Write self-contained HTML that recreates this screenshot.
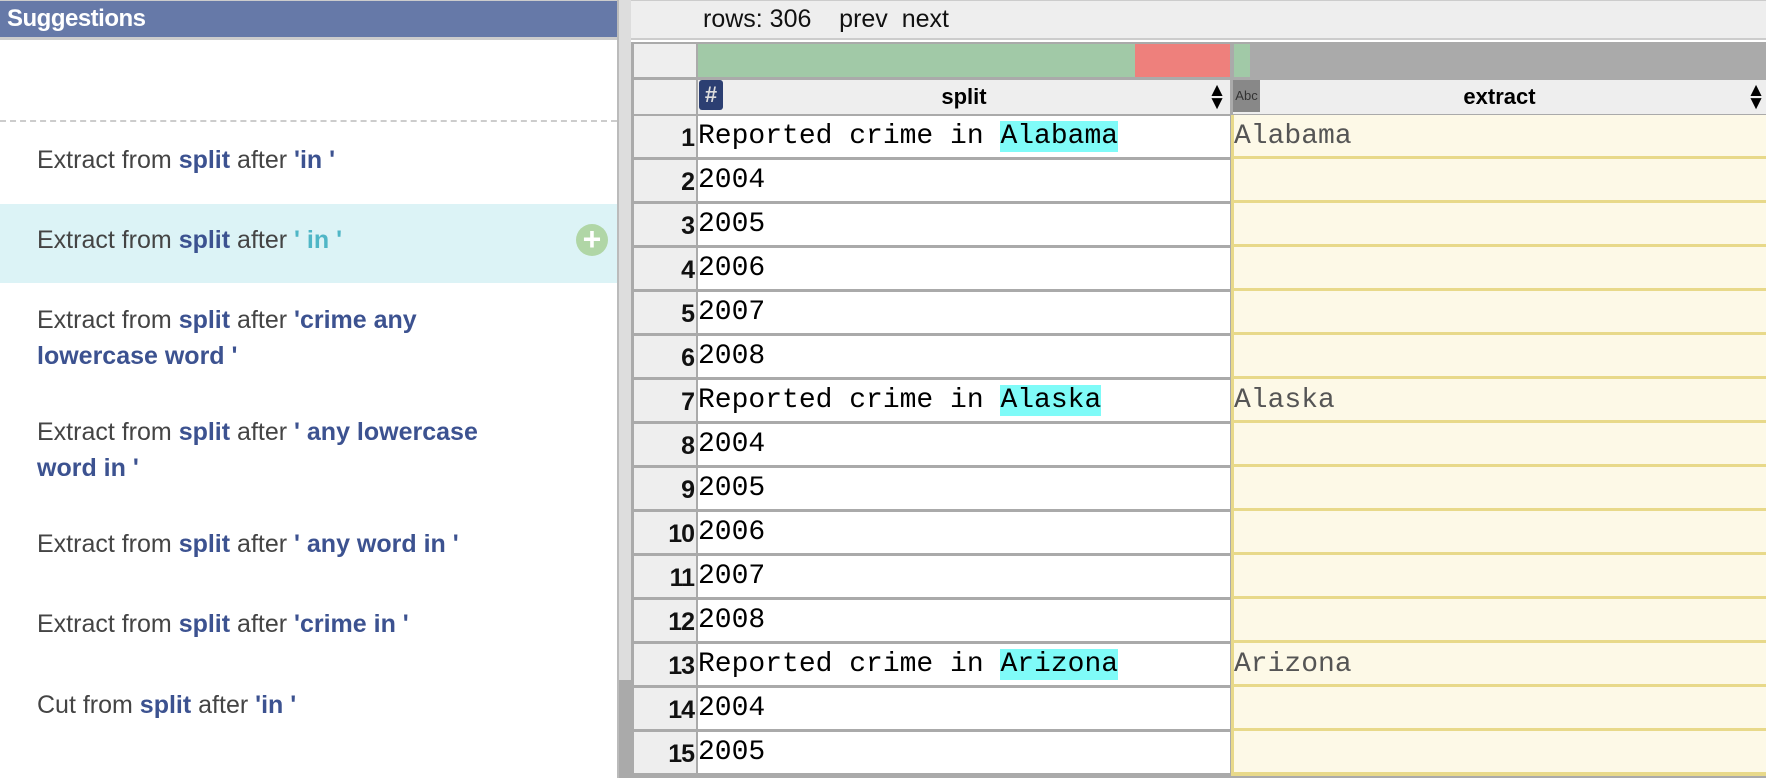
<!DOCTYPE html>
<html><head><meta charset="utf-8"><style>
*{margin:0;padding:0;box-sizing:border-box}
body{width:1766px;height:778px;overflow:hidden;background:#fff;font-family:"Liberation Sans",sans-serif;position:relative}
.abs{position:absolute}
#left{left:0;top:0;width:617px;height:778px;background:#fff}
#hdr{left:0;top:0;width:617px;height:40px;background:#6679a8;color:#fff;font-weight:bold;font-size:24px;padding:4px 0 0 7px;border-top:1px solid #ccc;border-bottom:3px solid #ccc;letter-spacing:-0.5px}
.sg{position:absolute;left:37px;font-size:25px;color:#444;line-height:36px;letter-spacing:0;width:480px}
.sg b{color:#3c5290}
.sg b.cy{color:#4fb6c6}
#hl{left:0;top:204px;width:617px;height:79px;background:#dcf3f6}
#plus{left:576px;top:224px;width:32px;height:32px;border-radius:50%;background:#b0d6a6;color:#fff;font-size:32px;line-height:30px;text-align:center;font-weight:bold}
#sb{left:617px;top:0;width:14px;height:778px;background:#ddd;border-left:2px solid #bbb}
#thumb{left:619px;top:680px;width:12px;height:98px;background:#aaa}
#top{left:631px;top:0;width:1135px;height:40px;background:#eee;border-top:1px solid #ccc;border-bottom:2px solid #ccc;font-size:25px;padding:4px 0 0 72px;color:#111}
#grid{left:631px;top:42px;width:1135px;height:736px;background:#aaa}
.c{position:absolute}
.rn{background:#eee;font-weight:bold;font-size:25px;text-align:right;padding-right:2px;color:#111;line-height:44px;letter-spacing:-1px}
.cell{background:#fff;font-family:"Liberation Mono",monospace;font-size:28px;line-height:42px;color:#000;white-space:pre}
.ex{background:#fdf9e7;font-family:"Liberation Mono",monospace;font-size:28px;line-height:40px;color:#555;border-left:3px solid #e8d98a;border-bottom:4px solid #e8d98a}
.hi{background:#7ffbf8}
.arr{font-size:19px;line-height:13px;text-align:center;width:20px}
</style></head><body>
<div id="left" class="abs"></div>
<div id="hdr" class="abs">Suggestions</div>
<div class="abs" style="left:0;top:120px;width:617px;border-top:2px dashed #ccc"></div>
<div id="hl" class="abs"></div>
<div id="plus" class="abs">+</div>
<div class="sg" style="top:142px">Extract from <b>split</b> after <b>'in '</b></div>
<div class="sg" style="top:222px">Extract from <b>split</b> after <b class="cy">' in '</b></div>
<div class="sg" style="top:302px;width:450px">Extract from <b>split</b> after <b>'crime any lowercase word '</b></div>
<div class="sg" style="top:414px;width:480px">Extract from <b>split</b> after <b>' any lowercase word in '</b></div>
<div class="sg" style="top:526px">Extract from <b>split</b> after <b>' any word in '</b></div>
<div class="sg" style="top:606px">Extract from <b>split</b> after <b>'crime in '</b></div>
<div class="sg" style="top:687px">Cut from <b>split</b> after <b>'in '</b></div>
<div id="sb" class="abs"></div>
<div id="thumb" class="abs"></div>
<div id="top" class="abs">rows: 306 &nbsp;&nbsp; prev&nbsp; next</div>
<div id="grid" class="abs">
 <div class="c" style="left:3px;top:2px;width:62px;height:33px;background:#eee"></div>
 <div class="c" style="left:67px;top:2px;width:437px;height:33px;background:#a1c9a7"></div>
 <div class="c" style="left:504px;top:2px;width:95px;height:33px;background:#ee807c"></div>
 <div class="c" style="left:603px;top:2px;width:16px;height:33px;background:#a1c9a7"></div>
 <div class="c" style="left:619px;top:2px;width:516px;height:33px;background:#aaa"></div>
 <div class="c" style="left:3px;top:38px;width:62px;height:34px;background:#eee"></div>
 <div class="c" style="left:67px;top:38px;width:532px;height:34px;background:#eee;font-weight:bold;font-size:22px;text-align:center;line-height:34px">split</div>
 <div class="c" style="left:68px;top:38px;width:24px;height:30px;background:#2c3f72;color:#ddd;font-weight:bold;font-size:22px;text-align:center;line-height:30px;border-radius:3px">#</div>
 <div class="c arr" style="left:576px;top:42px">&#9650;<br>&#9660;</div>
 <div class="c" style="left:602px;top:38px;width:533px;height:34px;background:#eee;font-weight:bold;font-size:22px;text-align:center;line-height:34px">extract</div>
 <div class="c" style="left:602px;top:38px;width:27px;height:32px;background:#888;color:#333;font-size:13px;text-align:center;line-height:32px">Abc</div>
 <div class="c arr" style="left:1115px;top:42px">&#9650;<br>&#9660;</div>
 <div id="rows"></div>
</div>
<script>
var d=["Reported crime in |Alabama","2004","2005","2006","2007","2008","Reported crime in |Alaska","2004","2005","2006","2007","2008","Reported crime in |Arizona","2004","2005"];
var h="";
for(var i=0;i<15;i++){var t=74+i*44;var s=d[i].split("|");
h+='<div class="c rn" style="left:3px;top:'+t+'px;width:62px;height:41px">'+(i+1)+'</div>';
h+='<div class="c cell" style="left:67px;top:'+t+'px;width:532px;height:41px">'+s[0]+(s[1]?'<span class="hi">'+s[1]+'</span>':'')+'</div>';
h+='<div class="c ex" style="left:600px;top:'+(t-1)+'px;width:535px;height:45px;line-height:44px">'+(s[1]||'')+'</div>';}
document.getElementById("rows").outerHTML=h;
</script>
</body></html>
